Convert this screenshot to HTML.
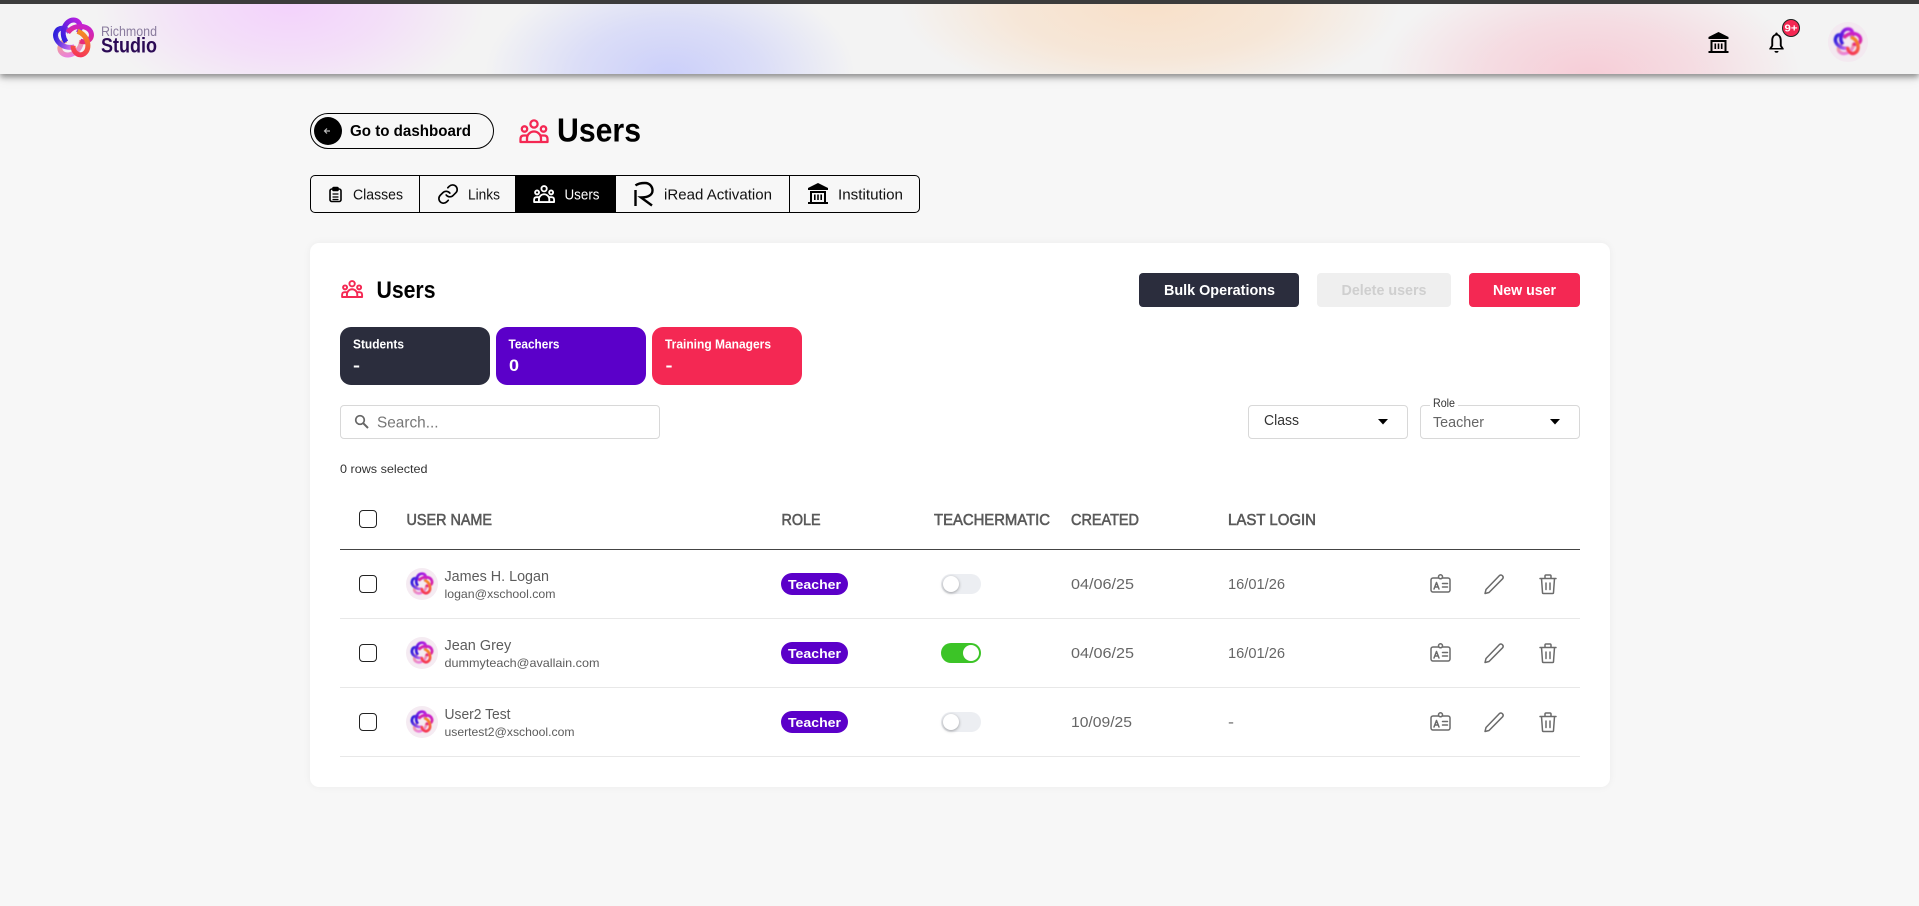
<!DOCTYPE html>
<html lang="en"><head><meta charset="utf-8"><title>Users</title>
<style>
html,body{margin:0;padding:0;width:1919px;height:906px;overflow:hidden;background:#f7f7f7;font-family:"Liberation Sans",sans-serif}
.b{position:absolute;box-sizing:border-box}
#top{left:0;top:0;width:1919px;height:4px;background:#3c3c3c;z-index:3}
#hdr{left:0;top:4px;width:1919px;height:70px;background:
radial-gradient(ellipse 195px 105px at 290px 0px,#f3d2fc 0%,rgba(243,210,252,.6) 50%,rgba(243,243,243,0) 100%),
radial-gradient(ellipse 185px 110px at 670px 72px,#cbcffa 0%,rgba(203,207,250,.6) 50%,rgba(243,243,243,0) 100%),
radial-gradient(ellipse 250px 100px at 1150px 0px,#f8e0c9 0%,rgba(248,224,201,.65) 55%,rgba(243,243,243,0) 100%),
radial-gradient(ellipse 210px 110px at 1590px 72px,#f6cdd7 0%,rgba(246,205,215,.6) 50%,rgba(243,243,243,0) 100%),
#f3f3f3;box-shadow:0 3px 6px rgba(0,0,0,.42),0 6px 12px rgba(0,0,0,.05)}
#card{left:310px;top:243px;width:1300px;height:544px;background:#fff;border-radius:9px;box-shadow:0 0 8px rgba(0,0,0,.05)}
#back{left:310px;top:113px;width:184px;height:36px;border:1px solid #000;border-radius:18px}
#dot{left:314px;top:117px;width:28px;height:28px;border-radius:50%;background:#000}
#tabs{left:310px;top:175px;width:610px;height:38px;border:1px solid #000;border-radius:5px}
.d{top:175px;width:1px;height:38px;background:#000}
#act{left:515px;top:175px;width:101px;height:38px;background:#000}
.btn{top:273px;height:34px;border-radius:4px}
.st{top:327px;width:150px;height:58px;border-radius:11px}
.in{top:405px;height:34px;border:1px solid #d8d8d8;border-radius:4px;background:#fff}
.ln{left:340px;width:1240px}
.pill{left:781px;width:67px;height:22px;border-radius:11px;background:#5b00c9}
.tg{left:941px;width:40px;height:20px;border-radius:10px;background:#eceef2}
.tg i{position:absolute;left:2px;top:2px;width:16px;height:16px;border-radius:50%;background:#fff;box-shadow:0 1px 3px rgba(0,0,0,.35)}
.tg.on{background:#3cc427}.tg.on i{left:22px;box-shadow:none}
.cb{left:359px;width:18px;height:18px;border:1.5px solid #222;border-radius:4px;background:#fff}
.av{left:406px;width:32px;height:32px;border-radius:50%;background:#f5ebf2}
#ov{position:absolute;left:0;top:0;z-index:4}
text{font-family:"Liberation Sans",sans-serif}
.bd{font-weight:700}
.hd{font-size:15.5px;fill:#5a5a5a;stroke:#5a5a5a;stroke-width:.6}
.nm{font-size:14.5px;fill:#5c5c5c}
.em{font-size:12px;fill:#5c5c5c}
.dt{font-size:14.5px;fill:#666}
.tb{font-size:15px;fill:#111}
.bg{font-size:13px;font-weight:700;fill:#fff}
.sl{font-size:12.5px;font-weight:700;fill:#fff}
.sv{font-size:17px;font-weight:700;fill:#fff}
.ic{fill:none;stroke:#6b6b6b;stroke-width:1.5;stroke-linecap:round;stroke-linejoin:round}
</style></head><body>
<div class="b" id="hdr"></div><div class="b" id="top"></div>
<div class="b" id="back"></div><div class="b" id="dot"></div>
<div class="b" id="tabs"></div>
<div class="b d" style="left:419px"></div><div class="b" id="act"></div><div class="b d" style="left:789px"></div>
<div class="b" id="card"></div>
<div class="b btn" style="left:1139px;width:160px;background:#2b2d3d"></div>
<div class="b btn" style="left:1317px;width:134px;background:#efefef"></div>
<div class="b btn" style="left:1469px;width:111px;background:#f42853"></div>
<div class="b st" style="left:340px;background:#2b2d3d"></div>
<div class="b st" style="left:496px;background:#5b00c9"></div>
<div class="b st" style="left:652px;background:#f42853"></div>
<div class="b in" style="left:340px;width:320px"></div>
<div class="b in" style="left:1248px;width:160px"></div>
<div class="b in" style="left:1420px;width:160px"></div>
<div class="b" style="left:1430px;top:400px;width:28px;height:8px;background:#fff"></div>
<div class="b cb" style="top:510px"></div>
<div class="b ln" style="top:549px;height:1px;background:#444"></div>
<div class="b ln" style="top:618px;height:1px;background:#e8e8e8"></div>
<div class="b ln" style="top:687px;height:1px;background:#e8e8e8"></div>
<div class="b ln" style="top:756px;height:1px;background:#e8e8e8"></div>
<div class="b cb" style="top:575px"></div><div class="b cb" style="top:644px"></div><div class="b cb" style="top:713px"></div>
<div class="b av" style="top:568px"></div><div class="b av" style="top:637px"></div><div class="b av" style="top:706px"></div>
<div class="b pill" style="top:573px"></div><div class="b pill" style="top:642px"></div><div class="b pill" style="top:711px"></div>
<div class="b tg" style="top:574px"><i></i></div><div class="b tg on" style="top:643px"><i></i></div><div class="b tg" style="top:712px"><i></i></div>

<svg id="ov" width="1919" height="906" viewBox="0 0 1919 906" xmlns="http://www.w3.org/2000/svg">
<defs>
<linearGradient id="g1" x1="0" y1="1" x2="1" y2="0"><stop offset="0" stop-color="#2a1ee0"/><stop offset="1" stop-color="#c020e0"/></linearGradient>
<linearGradient id="g2" x1="0" y1="0" x2="1" y2="1"><stop offset="0" stop-color="#c020e0"/><stop offset="1" stop-color="#f5305a"/></linearGradient>
<linearGradient id="g3" x1="1" y1="0" x2="0" y2="1"><stop offset="0" stop-color="#f5305a"/><stop offset="1" stop-color="#f59020"/></linearGradient>
<linearGradient id="g4" x1="1" y1="1" x2="0" y2="0"><stop offset="0" stop-color="#f6b860"/><stop offset="1" stop-color="#e878f0"/></linearGradient>
<linearGradient id="g5" x1="0" y1="1" x2="0" y2="0"><stop offset="0" stop-color="#e878f0"/><stop offset="1" stop-color="#3020dc"/></linearGradient>
<filter id="bl" x="-20%" y="-20%" width="140%" height="140%"><feGaussianBlur stdDeviation="1"/></filter>
<g id="logo" fill="none" stroke-width="5" stroke-linecap="butt">
<path transform="rotate(216)" stroke="url(#g4)" d="M-7.500 3.500C-14-6-8-18.500 0-18.500C7-18.500 8.500-10 4.500-5.500"/>
<path transform="rotate(288)" stroke="url(#g5)" d="M-7.500 3.500C-14-6-8-18.500 0-18.500C7-18.500 8.500-10 4.500-5.500"/>
<path transform="rotate(0)" stroke="url(#g1)" d="M-7.500 3.500C-14-6-8-18.500 0-18.500C7-18.500 8.500-10 4.500-5.500"/>
<path transform="rotate(72)" stroke="url(#g2)" d="M-7.500 3.500C-14-6-8-18.500 0-18.500C7-18.500 8.500-10 4.500-5.500"/>
<path transform="rotate(144)" stroke="url(#g3)" d="M-7.500 3.500C-14-6-8-18.500 0-18.500C7-18.500 8.500-10 4.500-5.500"/>
</g>
<g id="grp" fill="none" stroke-linecap="round" stroke-linejoin="round">
<circle cx="15" cy="5" r="3.6"/><circle cx="5.5" cy="10" r="2.7"/><circle cx="24.5" cy="10" r="2.7"/>
<path d="M8 23V19.5a7 7 0 0 1 14 0V23M8 16.5H5Q1.5 16.5 1.5 20V23M22 16.5h3q3.500 0 3.500 3.500V23M1.500 23H28.500"/>
</g>
<g id="inst"><path d="M10 0L20 5V7H0V5Z"/><path d="M0 19h20v2H0z"/><path fill-rule="evenodd" d="M2 8h16v11h-2V10H4v9H2z"/><path d="M6 11.500h1.600v5.500H6zM9.200 11.500h1.600v5.500H9.200zM12.400 11.500H14v5.500h-1.600z"/></g>
<g id="idc" class="ic"><rect x="1" y="4" width="19" height="14" rx="2"/><circle cx="10.500" cy="2.800" r="2" fill="#fff"/><path d="M4 15l2.500-6.500L9 15M5 13h3M12.500 9.500H17.500M12.500 13H17.500"/></g>
<g id="pen" class="ic"><path d="M15.500 1.500a2.300 2.300 0 0 1 3.200 3.200L5 18.500 1 19.500l1-4z"/></g>
<g id="trs" class="ic"><path d="M1 4.500H17M6 4.500V2a1 1 0 0 1 1-1h4a1 1 0 0 1 1 1v2.500M2.500 4.500l1 14a1 1 0 0 0 1 1h9a1 1 0 0 0 1-1l1-14M7 9v6.500M11 9v6.500"/></g>
</defs>

<!-- header -->
<use href="#logo" transform="translate(73.500 38.500)"/>
<text x="101" y="36" font-size="14" fill="#8a7c9e" textLength="56" lengthAdjust="spacingAndGlyphs">Richmond</text>
<text x="101" y="52.500" font-size="21.500" class="bd" fill="#2b0a55" textLength="56" lengthAdjust="spacingAndGlyphs">Studio</text>
<use href="#inst" transform="translate(1708.500 32)" fill="#000"/>
<path d="M1777 32.500a1.200 1.200 0 0 1 1.200 1.500c3 1 4 3.500 4 6.500v5l2 3v1h-14.400v-1l2-3v-5c0-3 1-5.500 4-6.500A1.200 1.200 0 0 1 1777 32.500zM1772.500 48h9l-1.200-2.300v-5.200c0-3-1.300-5-3.300-5s-3.300 2-3.300 5v5.200z" fill="#000" fill-rule="evenodd" transform="translate(-.5 0)"/>
<path d="M1774.500 51h4a2 1.800 0 0 1-4 0z" fill="#000"/>
<circle cx="1791" cy="28" r="8.500" fill="#f42853" stroke="#222" stroke-width="1"/>
<text x="1784.500" y="31.500" font-size="10" class="bd" fill="#fff" textLength="13" lengthAdjust="spacingAndGlyphs">9+</text>
<circle cx="1848" cy="42" r="20" fill="#f3e6ef" opacity=".8"/>
<use href="#logo" transform="translate(1848 42) scale(.7)" filter="url(#bl)"/>

<!-- page head -->
<path d="M330 131h-5.500M327 128.500L324.500 131L327 133.500" fill="none" stroke="#bbb" stroke-width="1.200"/>
<text x="350" y="136" font-size="15.500" class="bd" textLength="121" lengthAdjust="spacingAndGlyphs">Go to dashboard</text>
<use href="#grp" transform="translate(519 119)" stroke="#f42853" stroke-width="2.300"/>
<text x="557" y="141.500" font-size="33" class="bd" textLength="84" lengthAdjust="spacingAndGlyphs">Users</text>

<!-- tabs -->
<g fill="none" stroke="#000" stroke-width="1.600" stroke-linejoin="round" stroke-linecap="round">
<rect x="330" y="189" width="11" height="12.500" rx="1.800"/><rect x="333" y="187.500" width="5" height="3" rx=".8" fill="#000"/><path d="M333 194h5M333 197h5M333 199.500h5" stroke-width="1.200"/>
<g transform="translate(437 183) scale(.92)" stroke-width="1.800"><path d="M10 13a5 5 0 0 0 7.540.54l3-3a5 5 0 0 0-7.070-7.070l-1.720 1.710"/><path d="M14 11a5 5 0 0 0-7.540-.54l-3 3a5 5 0 0 0 7.070 7.070l1.710-1.710"/></g>
</g>
<use href="#grp" transform="translate(533 185) scale(.74)" stroke="#fff" stroke-width="2.500"/>
<g fill="none" stroke="#000" stroke-width="2.400">
<path d="M635.500 190V206"/>
<path d="M635.500 185.500C638 183.500 642 183 645 183C650 183 652.500 187 652.500 190.500C652.500 195 648 197.500 641 197.500L652 205.500"/>
</g>
<use href="#inst" transform="translate(808 183)" fill="#000"/>
<text x="353" y="199.500" class="tb" textLength="50" lengthAdjust="spacingAndGlyphs">Classes</text>
<text x="468" y="199.500" class="tb" textLength="32" lengthAdjust="spacingAndGlyphs">Links</text>
<text x="564.500" y="199.500" class="tb" style="fill:#fff" textLength="35" lengthAdjust="spacingAndGlyphs">Users</text>
<text x="664" y="199.500" class="tb" textLength="108" lengthAdjust="spacingAndGlyphs">iRead Activation</text>
<text x="838" y="199.500" class="tb" textLength="65" lengthAdjust="spacingAndGlyphs">Institution</text>

<!-- card head -->
<use href="#grp" transform="translate(341 280) scale(.74)" stroke="#f42853" stroke-width="2.600"/>
<text x="376.500" y="298" font-size="24" class="bd" textLength="59" lengthAdjust="spacingAndGlyphs">Users</text>
<text x="1164" y="295" font-size="15" class="bd" fill="#fff" textLength="111" lengthAdjust="spacingAndGlyphs">Bulk Operations</text>
<text x="1341.500" y="295" font-size="15" class="bd" fill="#cfcfcf" textLength="85" lengthAdjust="spacingAndGlyphs">Delete users</text>
<text x="1493" y="295" font-size="15" class="bd" fill="#fff" textLength="63" lengthAdjust="spacingAndGlyphs">New user</text>

<text x="353" y="348.500" class="sl" textLength="51" lengthAdjust="spacingAndGlyphs">Students</text>
<text x="508.500" y="348.500" class="sl" textLength="51" lengthAdjust="spacingAndGlyphs">Teachers</text>
<text x="665" y="348.500" class="sl" textLength="106" lengthAdjust="spacingAndGlyphs">Training Managers</text>
<text x="353" y="371" class="sv" textLength="7" lengthAdjust="spacingAndGlyphs">-</text>
<text x="509" y="371" class="sv" textLength="10" lengthAdjust="spacingAndGlyphs">0</text>
<text x="665.500" y="371" class="sv" textLength="7" lengthAdjust="spacingAndGlyphs">-</text>

<!-- filters -->
<g fill="none" stroke="#666" stroke-width="1.700"><circle cx="360" cy="420" r="4.300"/><path d="M363.200 423.200L368 428" stroke-width="2"/></g>
<text x="377" y="427.300" font-size="16" fill="#777" textLength="61.500" lengthAdjust="spacingAndGlyphs">Search...</text>
<text x="340" y="473" font-size="12" fill="#333" textLength="87.500" lengthAdjust="spacingAndGlyphs">0 rows selected</text>
<text x="1264" y="425" font-size="15" fill="#333" textLength="35" lengthAdjust="spacingAndGlyphs">Class</text>
<path d="M1378 419h10l-5 5.500z" fill="#000"/>
<text x="1433" y="407" font-size="12" fill="#333" textLength="22" lengthAdjust="spacingAndGlyphs">Role</text>
<text x="1433" y="427" font-size="15" fill="#666" textLength="51" lengthAdjust="spacingAndGlyphs">Teacher</text>
<path d="M1550 419h10l-5 5.500z" fill="#000"/>

<!-- table head -->
<text x="406.500" y="525" class="hd" textLength="85.500" lengthAdjust="spacingAndGlyphs">USER NAME</text>
<text x="781.500" y="525" class="hd" textLength="39" lengthAdjust="spacingAndGlyphs">ROLE</text>
<text x="934" y="525" class="hd" textLength="116" lengthAdjust="spacingAndGlyphs">TEACHERMATIC</text>
<text x="1071" y="525" class="hd" textLength="68" lengthAdjust="spacingAndGlyphs">CREATED</text>
<text x="1228" y="525" class="hd" textLength="88" lengthAdjust="spacingAndGlyphs">LAST LOGIN</text>

<!-- row 1 -->
<use href="#logo" transform="translate(422 584) scale(.56)" filter="url(#bl)"/>
<text x="444.500" y="581" class="nm" textLength="104.500" lengthAdjust="spacingAndGlyphs">James H. Logan</text>
<text x="444.500" y="598" class="em" textLength="111" lengthAdjust="spacingAndGlyphs">logan@xschool.com</text>
<text x="788" y="589" class="bg" textLength="53" lengthAdjust="spacingAndGlyphs">Teacher</text>
<text x="1071" y="589" class="dt" textLength="63" lengthAdjust="spacingAndGlyphs">04/06/25</text>
<text x="1228" y="589" class="dt" textLength="57" lengthAdjust="spacingAndGlyphs">16/01/26</text>
<use href="#idc" transform="translate(1430 574)"/><use href="#pen" transform="translate(1484 574)"/><use href="#trs" transform="translate(1539 574)"/>

<!-- row 2 -->
<use href="#logo" transform="translate(422 653) scale(.56)" filter="url(#bl)"/>
<text x="444.500" y="650" class="nm" textLength="66.700" lengthAdjust="spacingAndGlyphs">Jean Grey</text>
<text x="444.500" y="667" class="em" textLength="155" lengthAdjust="spacingAndGlyphs">dummyteach@avallain.com</text>
<text x="788" y="658" class="bg" textLength="53" lengthAdjust="spacingAndGlyphs">Teacher</text>
<text x="1071" y="658" class="dt" textLength="63" lengthAdjust="spacingAndGlyphs">04/06/25</text>
<text x="1228" y="658" class="dt" textLength="57" lengthAdjust="spacingAndGlyphs">16/01/26</text>
<use href="#idc" transform="translate(1430 643)"/><use href="#pen" transform="translate(1484 643)"/><use href="#trs" transform="translate(1539 643)"/>

<!-- row 3 -->
<use href="#logo" transform="translate(422 722) scale(.56)" filter="url(#bl)"/>
<text x="444.500" y="719" class="nm" textLength="66" lengthAdjust="spacingAndGlyphs">User2 Test</text>
<text x="444.500" y="736" class="em" textLength="130" lengthAdjust="spacingAndGlyphs">usertest2@xschool.com</text>
<text x="788" y="727" class="bg" textLength="53" lengthAdjust="spacingAndGlyphs">Teacher</text>
<text x="1071" y="727" class="dt" textLength="61" lengthAdjust="spacingAndGlyphs">10/09/25</text>
<text x="1228" y="727" class="dt" textLength="6" lengthAdjust="spacingAndGlyphs">-</text>
<use href="#idc" transform="translate(1430 712)"/><use href="#pen" transform="translate(1484 712)"/><use href="#trs" transform="translate(1539 712)"/>
</svg>
</body></html>
